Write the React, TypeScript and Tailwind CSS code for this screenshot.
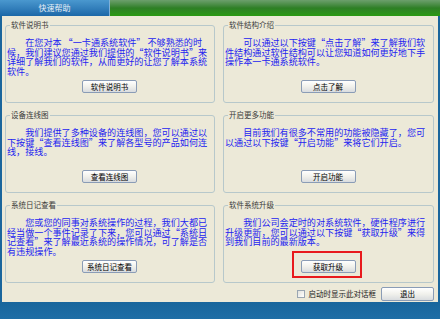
import React from "react";

const cjk = { fontFamily: '"Noto Sans CJK SC", "Noto Sans", sans-serif' };

type Box = { title: string; lines: string[]; button: string; highlight?: boolean };

const boxes: Box[] = [
  {
    title: "软件说明书",
    lines: [
      "　　在您对本 “一卡通系统软件” 不够熟悉的时",
      "候，我们建议您通过我们提供的“软件说明书”来",
      "详细了解我们的软件，从而更好的让您了解本系统",
      "软件。",
    ],
    button: "软件说明书",
  },
  {
    title: "软件结构介绍",
    lines: [
      "　　可以通过以下按键“点击了解”来了解我们软",
      "件结构通过软件结构可以让您知道如何更好地下手",
      "操作本一卡通系统软件。",
    ],
    button: "点击了解",
  },
  {
    title: "设备连线图",
    lines: [
      "　　我们提供了多种设备的连线图，您可以通过以",
      "下按键“查看连线图”来了解各型号的产品如何连",
      "线，接线。",
    ],
    button: "查看连线图",
  },
  {
    title: "开启更多功能",
    lines: ["　　目前我们有很多不常用的功能被隐藏了，您可", "以通过以下按键“开启功能”来将它们开启。"],
    button: "开启功能",
  },
  {
    title: "系统日记查看",
    lines: [
      "　　您或您的同事对系统操作的过程，我们大都已",
      "经当做一个事件记录了下来，您可以通过“系统日",
      "记查看”来了解最近系统的操作情况，可了解是否",
      "有违规操作。",
    ],
    button: "系统日记查看",
  },
  {
    title: "软件系统升级",
    lines: [
      "　　我们公司会定时的对系统软件，硬件程序进行",
      "升级更新，您可以通过以下按键“获取升级”来得",
      "到我们目前的最新版本。",
    ],
    button: "获取升级",
    highlight: true,
  },
];

function XpButton({ label, className = "" }: { label: string; className?: string }) {
  return (
    <button
      className={`flex items-center justify-center rounded-[2px] border border-[#8a9cb6] bg-gradient-to-b from-white via-[#f1f1ec] to-[#d9dcdf] text-[7.5px] leading-none text-black ${className}`}
      style={cjk}
    >
      {label}
    </button>
  );
}

function GroupBox({ box }: { box: Box }) {
  return (
    <div className="relative h-[78px] rounded-[3px] border border-[#b7c8cb] pl-[1px] pr-[2px] pt-[12px]">
      <span
        className="absolute -top-[6px] left-[4px] bg-[#ECE9D8] px-[1px] text-[7.5px] leading-[10px] text-[#3a3a3a]"
        style={cjk}
      >
        {box.title}
      </span>
      <div className="h-[42px] text-[9.1px] leading-[9.5px] text-[#2424f0]" style={cjk}>
        {box.lines.map((line, i) => (
          <div key={i} className="whitespace-nowrap">
            {line}
          </div>
        ))}
      </div>
      <div className="flex justify-center">
        <div className="relative">
          <XpButton label={box.button} className="h-[13px] w-[55px]" />
          {box.highlight && (
            <div className="absolute -bottom-[5px] -left-[9px] -right-[6px] -top-[9px] border-2 border-[#e8191c]" />
          )}
        </div>
      </div>
    </div>
  );
}

export default function App() {
  return (
    <div className="flex h-[319px] w-[440px] flex-col overflow-hidden bg-[#1a669d]">
      <div className="flex h-[16px]">
        <div
          className="flex w-[110px] items-center justify-center border-r border-[#7fb0d8] bg-gradient-to-b from-[#4a98cf] to-[#1b68a8] text-[8px] text-[#e6eef6]"
          style={cjk}
        >
          快速帮助
        </div>
        <div className="flex-1 bg-gradient-to-b from-[#6c9f6c] via-[#2e7f25] to-[#2a9a12]" />
      </div>
      <div className="mx-[2px] flex h-[286px] flex-col bg-[#ECE9D8] pl-[3px] pr-[4px] pt-[9px]">
        <div className="grid grid-cols-[210px_211px] gap-x-[8px] gap-y-[12px]">
          {boxes.map((b) => (
            <GroupBox key={b.title} box={b} />
          ))}
        </div>
        <div className="mt-[4px] flex h-[14px] items-center justify-end gap-[4px]">
          <span className="h-[8px] w-[8px] border border-[#9aa6b2] bg-gradient-to-br from-[#e2e2dc] to-white" />
          <span className="mr-[1px] text-[7.5px] text-[#222]" style={cjk}>
            启动时显示此对话框
          </span>
          <XpButton label="退出" className="h-[14px] w-[53px]" />
        </div>
      </div>
      <div className="flex-1 bg-gradient-to-b from-[#18659c] to-[#1e6ea6]" />
    </div>
  );
}
